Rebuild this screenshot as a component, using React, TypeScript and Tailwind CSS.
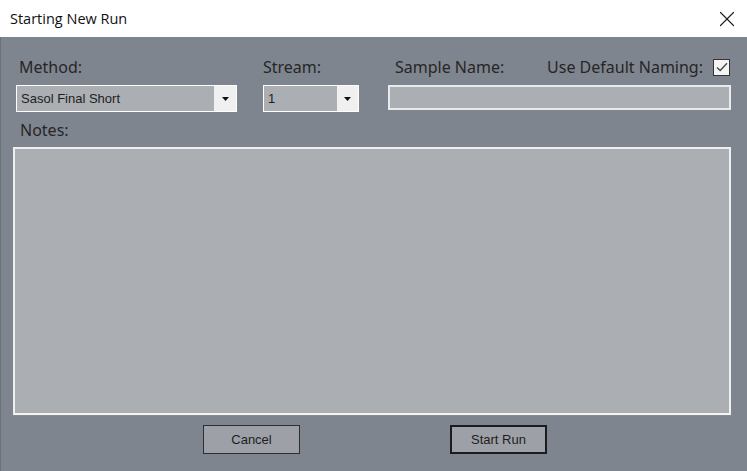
import { X } from "lucide-react";

const labelFont = { fontFamily: '"Noto Sans", "Open Sans", sans-serif' };
const ctrlFont = { fontFamily: '"Liberation Sans", Arial, sans-serif' };

const Combo = ({ value, width, arrowAt }: { value: string; width: string; arrowAt: string }) => (
  <div className={`flex h-[27px] ${width} border border-white bg-[#f0f0f0]`}>
    <div className={`${arrowAt} flex items-center bg-[#abaeb2] pl-[4px] text-[13px] text-[#1e1e1e]`} style={ctrlFont}>
      {value}
    </div>
    <div className="flex flex-1 items-center justify-center">
      <svg width="7" height="4" viewBox="0 0 7 4">
        <path d="M0 0h7L3.5 4z" fill="#111" />
      </svg>
    </div>
  </div>
);

const Button = ({ label, primary }: { label: string; primary?: boolean }) => (
  <button
    className={`h-[29px] w-[97px] bg-[#9da0a6] text-[13px] text-[#1e1e1e] ${
      primary ? "border-2 border-[#1c1c1c]" : "border border-[#2e2e2e]"
    }`}
    style={ctrlFont}
  >
    {label}
  </button>
);

export default function App() {
  return (
    <div className="flex h-[471px] w-[747px] flex-col overflow-hidden bg-[#7f858e]">
      <div className="flex h-[37px] shrink-0 items-center justify-between bg-white pl-[10px] pr-[7px]">
        <span className="text-[14.5px] text-[#111]" style={{ fontFamily: '"Open Sans", "Noto Sans", sans-serif' }}>
          Starting New Run
        </span>
        <X size={26} strokeWidth={1.1} className="text-[#222]" />
      </div>

      <div className="flex flex-1 flex-col border-l border-[#6c7078] text-[#262626]" style={labelFont}>
        <div className="mt-[19px] flex pl-[15px]">
          <div className="flex w-[221px] flex-col">
            <span className="pl-[3px] text-[16px] leading-[22px]">Method:</span>
            <div className="mt-[7px]">
              <Combo value="Sasol Final Short" width="w-[221px]" arrowAt="w-[197px]" />
            </div>
          </div>
          <div className="ml-[26px] flex w-[96px] flex-col">
            <span className="text-[16px] leading-[22px]">Stream:</span>
            <div className="mt-[7px]">
              <Combo value="1" width="w-[96px]" arrowAt="w-[73px]" />
            </div>
          </div>
          <div className="ml-[29px] flex w-[343px] flex-col">
            <div className="flex items-center text-[16px] leading-[22px]">
              <span className="pl-[7px]">Sample Name:</span>
              <span className="ml-auto">Use Default Naming:</span>
              <span className="ml-[10px] mr-[1px] flex h-[17px] w-[17px] items-center justify-center border border-[#333] bg-[#f4f4f4]">
                <svg width="12" height="10" viewBox="0 0 12 10">
                  <path d="M1 5.5l3.2 3L11 1.2" fill="none" stroke="#444" strokeWidth="1.3" />
                </svg>
              </span>
            </div>
            <div className="mt-[7px] h-[25px] w-[343px] border-2 border-[#e9eaec] bg-[#abaeb2]" />
          </div>
        </div>

        <span className="mt-[7px] pl-[19px] text-[16px] leading-[22px]">Notes:</span>
        <div className="ml-[12px] mt-[6px] h-[268px] w-[718px] border-2 border-[#eeeff0] border-b-[#f4f4f4] bg-[#abaeb2] shadow-[0_1px_0_#8c8a8a]" />

        <div className="mt-[10px] flex">
          <div className="ml-[202px]">
            <Button label="Cancel" />
          </div>
          <div className="ml-[150px]">
            <Button label="Start Run" primary />
          </div>
        </div>
      </div>
    </div>
  );
}
